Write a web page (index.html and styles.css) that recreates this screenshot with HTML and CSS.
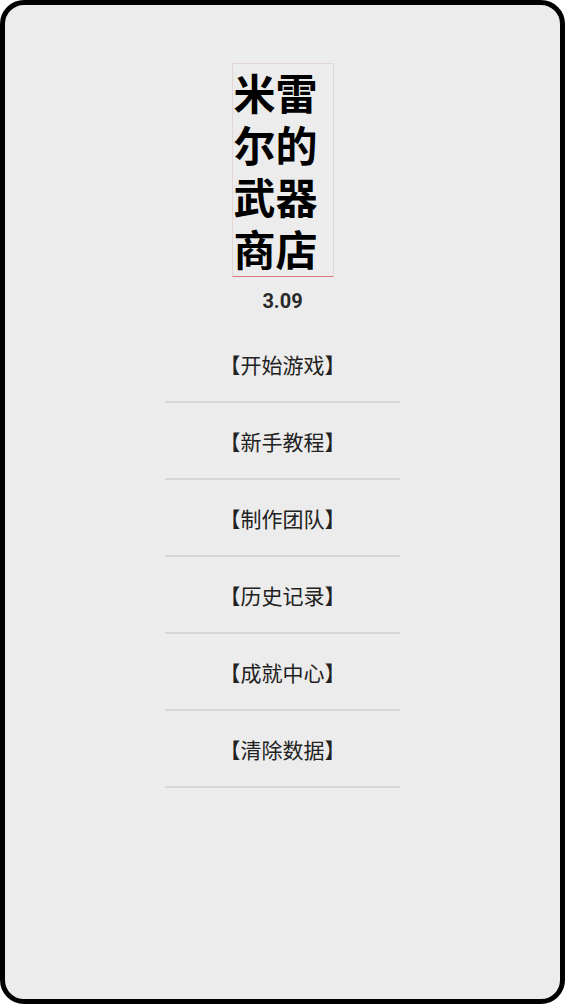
FILE: index.html
```html
<!DOCTYPE html>
<html lang="zh">
<head>
<meta charset="utf-8">
<title>米雷尔的武器商店</title>
<link rel="stylesheet" href="styles.css">
</head>
<body>
<div class="frame">
  <div class="title-wrap">
    <h1 class="title">米雷尔的武器商店</h1>
  </div>
  <div class="version">3.09</div>
  <ul class="menu">
    <li class="menu-item">【开始游戏】</li>
    <li class="menu-item">【新手教程】</li>
    <li class="menu-item">【制作团队】</li>
    <li class="menu-item">【历史记录】</li>
    <li class="menu-item">【成就中心】</li>
    <li class="menu-item">【清除数据】</li>
  </ul>
</div>
</body>
</html>
```

FILE: styles.css
```css
html, body {
  margin: 0;
  padding: 0;
  background: #ffffff;
}
body {
  font-family: "Noto Sans CJK SC", "Noto Sans", sans-serif;
}
.frame {
  box-sizing: border-box;
  width: 565px;
  height: 1004px;
  border: 5px solid #000;
  border-radius: 24px;
  background: #ececec;
  display: flex;
  flex-direction: column;
  align-items: center;
  padding-top: 58px;
}
.title-wrap {
  width: 100px;
  border: 1px solid #e3d6d6;
  border-bottom: 1px solid #e07878;
}
.title {
  margin: 0;
  padding: 2px 0 2px 1px;
  font-size: 42px;
  line-height: 52px;
  font-weight: 700;
  color: #000;
  word-break: break-all;
}
.version {
  margin-top: 11px;
  font-family: "Roboto", "Noto Sans", sans-serif;
  font-weight: 700;
  font-size: 20px;
  line-height: 26px;
  color: #2a2a2a;
}
.menu {
  list-style: none;
  margin: 12px 0 0;
  padding: 0;
  width: 235px;
}
.menu-item {
  height: 75px;
  border-bottom: 2px solid #d6d6d6;
  display: flex;
  align-items: center;
  justify-content: center;
  font-size: 21px;
  font-weight: 400;
  color: #222;
}
```
